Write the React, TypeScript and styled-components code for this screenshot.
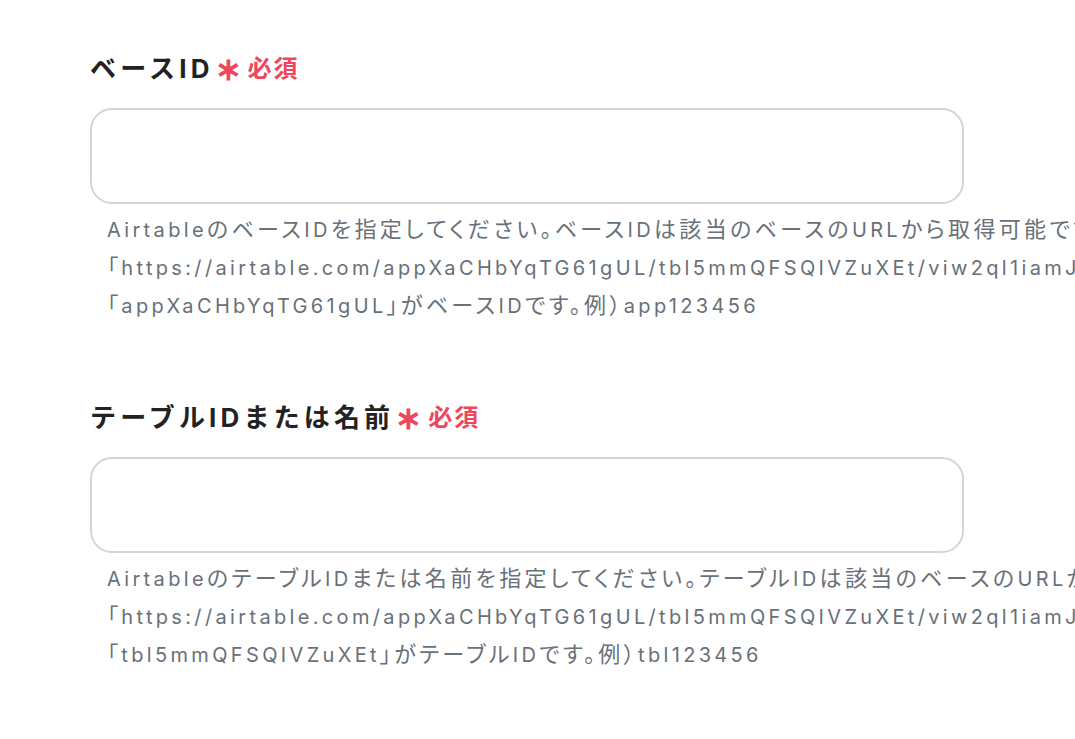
import styled, { createGlobalStyle } from 'styled-components';

const GlobalStyle = createGlobalStyle`
  html, body {
    margin: 0;
    padding: 0;
    background: #ffffff;
    overflow: hidden;
  }
  body {
    font-family: Inter, "Noto Sans CJK JP", sans-serif;
  }
`;

type FieldProps = {
  label: string;
  help: string[];
};

const fields: FieldProps[] = [
  {
    label: 'ベースID',
    help: [
      'AirtableのベースIDを指定してください。ベースIDは該当のベースのURLから取得可能です。',
      '「https://airtable.com/appXaCHbYqTG61gUL/tbl5mmQFSQIVZuXEt/viw2ql1iamJ8SOAiJ」の場合、',
      '「appXaCHbYqTG61gUL」がベースIDです。例）app123456',
    ],
  },
  {
    label: 'テーブルIDまたは名前',
    help: [
      'AirtableのテーブルIDまたは名前を指定してください。テーブルIDは該当のベースのURLから取得可能です。',
      '「https://airtable.com/appXaCHbYqTG61gUL/tbl5mmQFSQIVZuXEt/viw2ql1iamJ8SOAiJ」の場合、',
      '「tbl5mmQFSQIVZuXEt」がテーブルIDです。例）tbl123456',
    ],
  },
];

// japanese runs render a little larger than the latin ones
const JP_RUN = /([\u3000-\u30ff\u4e00-\u9fff\uff00-\uffef]+)/;

function HelpText({ text }: { text: string }) {
  return (
    <St.HelpLine>
      {text.split(JP_RUN).map((part, i) =>
        i % 2 === 1 ? <St.Jp key={i}>{part}</St.Jp> : part
      )}
    </St.HelpLine>
  );
}

function Field({ label, help }: FieldProps) {
  return (
    <St.Field>
      <St.LabelRow>
        <St.Label>{label}</St.Label>
        <St.Asterisk>∗</St.Asterisk>
        <St.Required>必須</St.Required>
      </St.LabelRow>
      <St.Input type="text" />
      <St.Help>
        {help.map((line) => (
          <HelpText key={line} text={line} />
        ))}
      </St.Help>
    </St.Field>
  );
}

export default function App() {
  return (
    <>
      <GlobalStyle />
      <St.Page>
        {fields.map((f) => (
          <Field key={f.label} {...f} />
        ))}
      </St.Page>
    </>
  );
}

const St = {
  Page: styled.div`
    display: flex;
    flex-direction: column;
    gap: 70px;
    padding: 46px 0 0 90px;
    width: 1800px;
  `,
  Field: styled.div`
    display: flex;
    flex-direction: column;
  `,
  LabelRow: styled.div`
    display: flex;
    align-items: center;
    height: 40px;
    margin-bottom: 22px;
  `,
  Label: styled.span`
    font-size: 26px;
    font-weight: 700;
    letter-spacing: 0.16em;
    color: #222222;
  `,
  Asterisk: styled.span`
    margin-left: 1px;
    font-size: 32px;
    font-weight: 700;
    color: #f0465b;
    line-height: 1;
    transform: translateY(3px);
  `,
  Required: styled.span`
    margin-left: 6px;
    font-size: 24px;
    font-weight: 700;
    letter-spacing: 0.08em;
    color: #f0465b;
  `,
  Input: styled.input`
    box-sizing: border-box;
    width: 874px;
    height: 96px;
    border: 2px solid #d2d4d9;
    border-radius: 22px;
    background: #ffffff;
    outline: none;
    font: inherit;
  `,
  Help: styled.div`
    display: flex;
    flex-direction: column;
    padding: 7px 0 0 17px;
  `,
  HelpLine: styled.div`
    height: 38px;
    font-size: 20px;
    line-height: 38px;
    letter-spacing: 0.167em;
    color: #687079;
    white-space: nowrap;
    font-feature-settings: "palt";
  `,
  Jp: styled.span`
    font-size: 22px;
    line-height: 1;
  `,
};
